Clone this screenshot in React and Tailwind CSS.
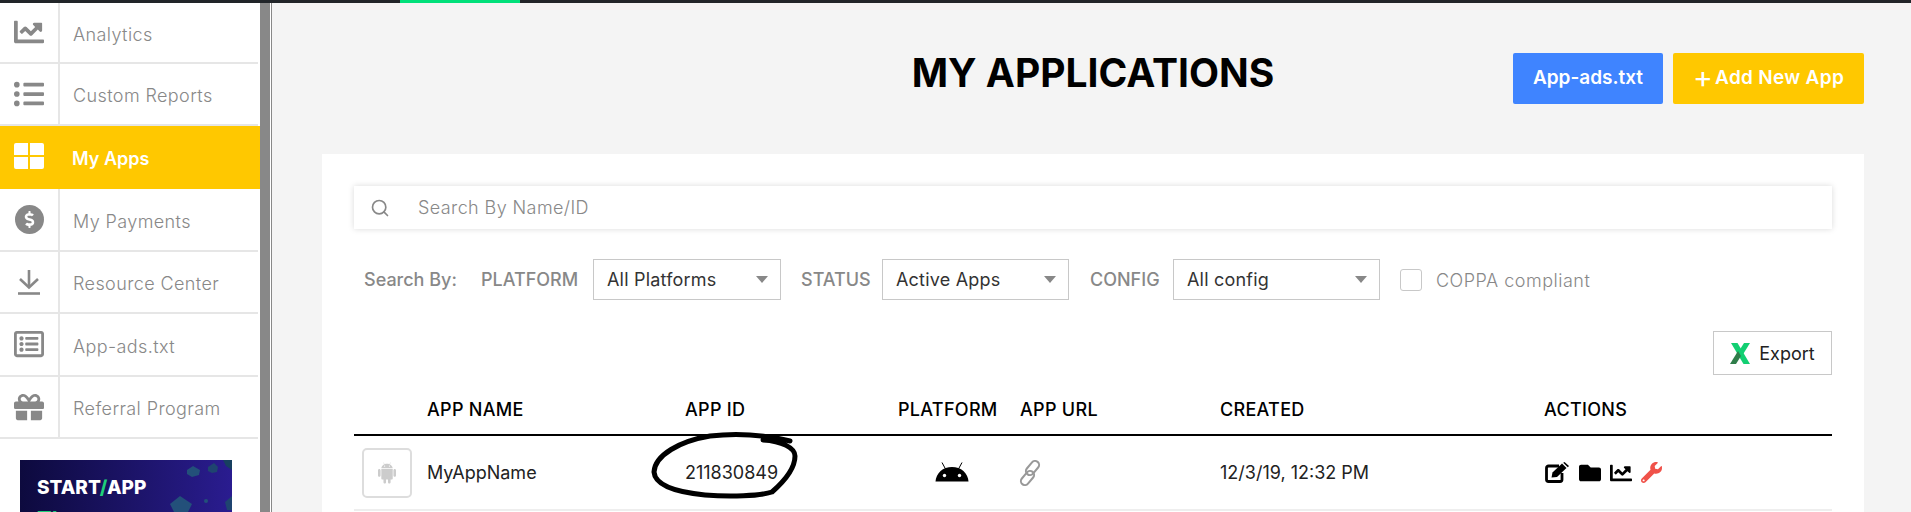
import React from 'react';
import { Search } from 'lucide-react';
import { FaChartLine, FaListUl, FaDollarSign, FaGift, FaFolder, FaWrench, FaRegListAlt } from 'react-icons/fa';
import { AiFillAndroid } from 'react-icons/ai';

const font = { fontFamily: '"Inter", "Liberation Sans", sans-serif' };

function GridIcon() {
  return (
    <div className="grid grid-cols-2 gap-[2px] w-[30px] h-[26px]">
      <div className="bg-white rounded-tl-[2px]" />
      <div className="bg-white rounded-tr-[2px]" />
      <div className="bg-white rounded-bl-[2px]" />
      <div className="bg-white rounded-br-[2px]" />
    </div>
  );
}

function DownloadIcon() {
  return (
    <svg width="24" height="26" viewBox="0 0 24 26" fill="none" stroke="#888888" strokeWidth="2.6">
      <path d="M12 1 V18" />
      <path d="M3 10 L12 18.5 L21 10" />
      <path d="M1 24.5 H23" />
    </svg>
  );
}

function AndroidHead() {
  return (
    <svg width="34" height="20" viewBox="0 0 34 20" className="-mt-[2px]">
      <path d="M0.5 19.5 C1 11 8 5 17 5 C26 5 33 11 33.5 19.5 Z" fill="#000" />
      <path d="M7 0.5 L10.5 7 M27 0.5 L23.5 7" stroke="#000" strokeWidth="1" />
      <circle cx="9.5" cy="13.5" r="1.7" fill="#fff" />
      <circle cx="24.5" cy="13.5" r="1.7" fill="#fff" />
    </svg>
  );
}

function ChainIcon() {
  return (
    <svg width="26" height="26" viewBox="0 0 26 26" fill="none" stroke="#999999" strokeWidth="2">
      <rect x="11.5" y="0" width="8" height="16" rx="4" transform="rotate(40 15.5 8)" />
      <rect x="6.5" y="10" width="8" height="16" rx="4" transform="rotate(40 10.5 18)" />
    </svg>
  );
}

function EditIcon() {
  return (
    <svg width="25" height="21" viewBox="0 0 25 21" fill="none">
      <path d="M14 4 H3.5 A2 2 0 0 0 1.5 6 V17.5 A2 2 0 0 0 3.5 19.5 H15 A2 2 0 0 0 17 17.5 V11" stroke="#000" strokeWidth="2.8" />
      <path d="M6.5 15.5 L7.5 10.5 L17 1.5 L21.5 6 L12 15 Z" fill="#000" />
      <path d="M18.2 0.8 L19.5 0 L24 4 L22.8 5.2 Z" fill="#000" />
    </svg>
  );
}

function ExcelX() {
  return (
    <svg width="21" height="21" viewBox="0 0 21 21">
      <path d="M1 0 H7.5 L20 21 H13.5 Z" fill="#12cf72" />
      <path d="M20 0 H14 L9 8 L12 13 Z" fill="#12cf72" />
      <path d="M0 21 H6 L11 13 L8 8 Z" fill="#2f7d4a" />
    </svg>
  );
}

const navItems = [
  { label: 'Analytics', icon: <FaChartLine size={30} />, h: 'h-[61px]' },
  { label: 'Custom Reports', icon: <FaListUl size={30} />, h: 'h-[62px]' },
  { label: 'My Apps', icon: <GridIcon />, active: true, h: 'h-[63px]' },
  {
    label: 'My Payments',
    icon: (
      <div className="w-[29px] h-[29px] rounded-full bg-[#888888] text-white flex items-center justify-center">
        <FaDollarSign size={17} />
      </div>
    ),
    h: 'h-[63px]',
  },
  { label: 'Resource Center', icon: <DownloadIcon />, h: 'h-[62px]' },
  { label: 'App-ads.txt', icon: <FaRegListAlt size={30} />, h: 'h-[63px]' },
  { label: 'Referral Program', icon: <FaGift size={30} />, h: 'h-[62px]' },
];

function NavRow({ item }) {
  if (item.active) {
    return (
      <div className={`${item.h} w-[260px] flex items-center bg-[#ffc800] text-white font-semibold text-[18px]`}>
        <div className="w-[58px] flex justify-center shrink-0 -mt-[4px]">{item.icon}</div>
        <span className="ml-[14px] pt-[1px]">{item.label}</span>
      </div>
    );
  }
  return (
    <div className={`${item.h} flex border-b-2 border-[#e6e6e6] text-[#888888] font-light text-[18px] tracking-[0.4px]`}>
      <div className="w-[60px] shrink-0 border-r-2 border-[#e6e6e6] flex items-center justify-center -mb-[2px] pb-[3px]">
        {item.icon}
      </div>
      <span className="ml-[13px] self-center pt-[3px]">{item.label}</span>
    </div>
  );
}

function Banner() {
  return (
    <div className="relative ml-[20px] mt-[21px] w-[212px] h-[80px] overflow-hidden bg-gradient-to-r from-[#0d0a3e] to-[#2a1c90] pl-[17px] pt-[18px]">
      <div className="text-white font-extrabold text-[19px] leading-none">
        START<span className="text-[#1fd07a]">/</span>APP
      </div>
      <div className="text-[#1fd07a] font-bold text-[22px] leading-none mt-[11px]">The</div>
      <svg className="absolute right-0 top-0" width="90" height="60" viewBox="0 0 90 60">
        <path d="M45 10 L51 6 L58 10 L57 15 L50 17 L45 14 Z" fill="#23507a" />
        <path d="M66 7 L72 3 L76 7 L75 12 L70 13 L66 11 Z" fill="#1f4470" />
        <path d="M81 0 H90 V10 L84 6 Z" fill="#173f5f" />
        <path d="M28 44 L38 36 L50 44 L46 52 H32 Z" fill="#23507a" />
        <path d="M83 42 L90 36 V50 H85 Z" fill="#1f4470" />
        <circle cx="64" cy="41" r="2" fill="#23507a" />
      </svg>
    </div>
  );
}

function Sidebar() {
  return (
    <aside className="w-[272px] h-full shrink-0 flex bg-white overflow-hidden">
      <div className="w-[258px] shrink-0 h-full">
        {navItems.map((item) => (
          <NavRow key={item.label} item={item} />
        ))}
        <Banner />
      </div>
      <div className="w-[10px] h-full bg-[#888888] ml-[2px]" />
      <div className="w-[1px] h-full bg-[#888888] ml-[1px]" />
    </aside>
  );
}

function Select({ label, w }) {
  return (
    <div className={`${w} h-[41px] border border-[#c8c8c8] flex items-center justify-between pl-[13px] pr-[12px] text-[#333333] font-normal text-[18px] tracking-[0.2px]`}>
      <span>{label}</span>
      <span className="w-0 h-0 border-x-[6px] border-x-transparent border-t-[7px] border-t-[#888888]" />
    </div>
  );
}

function Head({ w, children }) {
  return <div className={`${w} shrink-0 font-medium text-[18px] tracking-[0.3px] text-black`}>{children}</div>;
}

export default function App() {
  return (
    <div className="w-[1911px] h-[512px] overflow-hidden flex flex-col bg-[#f4f4f4]" style={font}>
      <div className="h-[3px] shrink-0 bg-[#212529] pl-[400px]">
        <div className="w-[120px] h-[3px] bg-[#00e07a]" />
      </div>
      <div className="flex-1 flex min-h-0">
        <Sidebar />
        <main className="flex-1 pl-[50px] pr-[47px] min-w-0">
          <div className="h-[151px] flex items-start relative pt-[50px] justify-end gap-[10px]">
            <h1 className="absolute inset-x-0 top-[47px] text-center font-bold text-[39px] leading-[45px] text-black">MY APPLICATIONS</h1>
            <button className="relative w-[150px] h-[51px] bg-[#3f84ff] rounded-[2px] text-white font-semibold text-[19px]">App-ads.txt</button>
            <button className="relative w-[191px] h-[51px] bg-[#ffc800] rounded-[2px] text-white font-semibold text-[19px] tracking-[0.3px] flex items-center justify-center gap-[2px]">
              <span className="text-[30px] font-normal leading-none -mt-[3px]">+</span>
              Add New App
            </button>
          </div>
          <div className="bg-white h-[400px] px-[32px] pt-[32px]">
            <div className="h-[43px] flex items-center shadow-[0_0_6px_rgba(0,0,0,0.15)] pl-[16px]">
              <Search size={20} className="text-[#888888]" />
              <span className="ml-[28px] text-[#888888] font-light text-[18px] tracking-[0.4px]">Search By Name/ID</span>
            </div>
            <div className="flex items-center mt-[30px] h-[41px] text-[#888888] text-[18px] font-medium">
              <span className="ml-[10px] w-[117px]">Search By:</span>
              <span className="w-[112px]">PLATFORM</span>
              <Select label="All Platforms" w="w-[188px]" />
              <span className="ml-[20px] w-[81px]">STATUS</span>
              <Select label="Active Apps" w="w-[187px]" />
              <span className="ml-[21px] w-[83px]">CONFIG</span>
              <Select label="All config" w="w-[207px]" />
              <span className="ml-[20px] w-[22px] h-[22px] border border-[#c8c8c8] rounded-[3px]" />
              <span className="ml-[14px] font-light tracking-[0.5px] pt-[1px]">COPPA compliant</span>
            </div>
            <div className="flex justify-end mt-[31px]">
              <button className="w-[119px] h-[44px] border border-[#c8c8c8] flex items-center justify-center gap-[8px] text-[18px] text-[#222222]">
                <ExcelX /> Export
              </button>
            </div>
            <div className="flex items-center h-[61px] border-b-2 border-black pl-[73px] pt-[10px]">
              <Head w="w-[258px]">APP NAME</Head>
              <Head w="w-[213px]">APP ID</Head>
              <Head w="w-[122px]">PLATFORM</Head>
              <Head w="w-[200px]">APP URL</Head>
              <Head w="w-[324px]">CREATED</Head>
              <Head w="w-[100px]">ACTIONS</Head>
            </div>
            <div className="flex items-center h-[75px] border-b-2 border-[#eeeeee] text-[18px] text-[#222222]">
              <div className="ml-[8px] w-[50px] h-[50px] border-2 border-[#dddddd] rounded-[5px] flex items-center justify-center">
                <AiFillAndroid size={24} className="text-[#cccccc]" />
              </div>
              <span className="ml-[15px] w-[258px]">MyAppName</span>
              <span className="relative w-[250px]">
                211830849
                <svg className="absolute left-[-35px] top-[-29px] w-[150px] h-[70px]" viewBox="0 0 150 70" fill="none">
                  <path d="M140 11 C115 5 85 3 60 6 C30 11 5 25 4 42 C5 55 25 62 55 65 C80 67 110 66 122 62 C130 55 145 40 145 26 C145 18 132 11 113 10" stroke="#000" strokeWidth="5" strokeLinecap="round" />
                </svg>
              </span>
              <AndroidHead />
              <div className="ml-[48px]"><ChainIcon /></div>
              <span className="ml-[177px] w-[325px]">12/3/19, 12:32 PM</span>
              <div className="flex items-center gap-[9px] text-black">
                <EditIcon />
                <FaFolder size={22} />
                <FaChartLine size={22} />
                <FaWrench size={21} className="text-[#f0524a]" />
              </div>
            </div>
          </div>
        </main>
      </div>
    </div>
  );
}
